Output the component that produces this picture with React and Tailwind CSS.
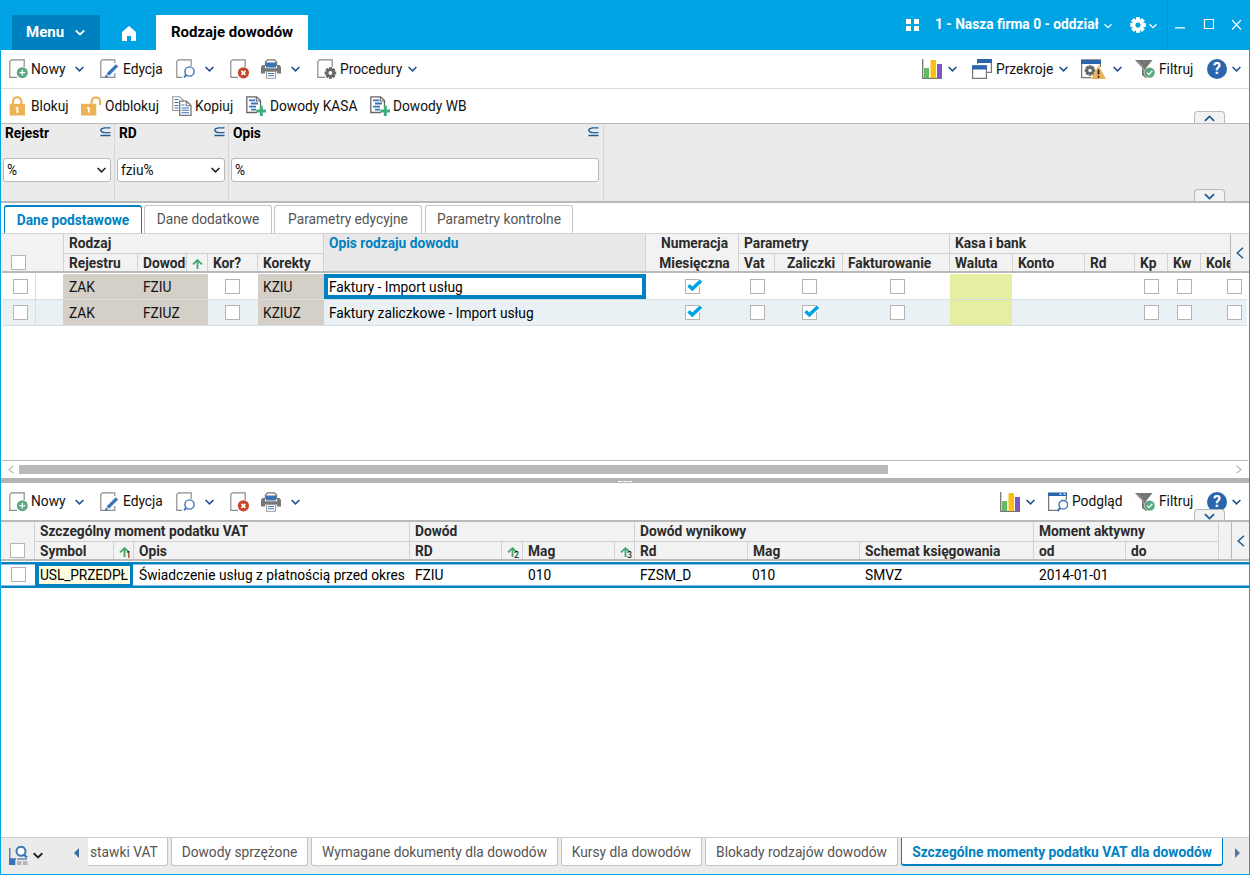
import React, { useState } from "react";

const Chevron = ({ className = "", color = "#1f4e8c", dir = "down", size = "w-[9px] h-[6px]", sw = 1.6 }) => (
  <svg viewBox="0 0 9 6" className={`shrink-0 ${size} ${className}`} fill="none" stroke={color} strokeWidth={sw}>
    <path d={dir === "up" ? "M0.6 5L4.5 1.2L8.4 5" : "M0.6 1L4.5 4.8L8.4 1"} />
  </svg>
);

const Svg = ({ children, w = 20, className = "" }) => (
  <svg width={w} height="20" viewBox={`0 0 ${w} 20`} fill="none" className={`shrink-0 ${className}`}>
    {children}
  </svg>
);

const Page = () => <path d="M15.2 8V0.8H2.4L0.8 2.4V18.3H8" stroke="#8c8c8c" strokeWidth="1.2" />;

const Cog = ({ cx, cy, r, fill, hole }) => (
  <g transform={`translate(${cx} ${cy})`} fill={fill}>
    {[0, 45, 90, 135].map((a) => (
      <rect key={a} x={-r * 0.26} y={-r} width={r * 0.52} height={r * 2} transform={`rotate(${a})`} />
    ))}
    <circle r={r * 0.74} />
    <circle r={r * 0.33} fill={hole} />
  </g>
);

const NewIcon = () => (
  <Svg>
    <Page />
    <circle cx="13.3" cy="13.7" r="5.5" fill="#58a881" />
    <path d="M13.3 10.8v5.8M10.4 13.7h5.8" stroke="#fff" strokeWidth="1.3" />
  </Svg>
);

const EditIcon = () => (
  <Svg>
    <path d="M14.8 4V0.8H2.4L0.8 2.4V18.3H14.8V14" stroke="#8c8c8c" strokeWidth="1.2" />
    <path d="M15.8 5.2L18.2 7.5L9 16.8L6.6 14.5Z" fill="#3a74b8" />
    <path d="M6 15.3L8.2 17.5L4.6 19Z" fill="#3a74b8" />
  </Svg>
);

const PreviewIcon = () => (
  <Svg>
    <path d="M15.2 7V0.8H2.4L0.8 2.4V18.3H6" stroke="#8c8c8c" strokeWidth="1.2" />
    <circle cx="13.5" cy="12.5" r="4.6" stroke="#3a74b8" strokeWidth="1.4" fill="#fff" />
    <path d="M10.4 15.7L8.1 18.4" stroke="#3a74b8" strokeWidth="2" />
  </Svg>
);

const DeleteIcon = () => (
  <Svg>
    <Page />
    <circle cx="13.4" cy="13.8" r="5.6" fill="#c8452a" />
    <path d="M11.4 11.8l4 4M15.4 11.8l-4 4" stroke="#fff" strokeWidth="1.7" />
  </Svg>
);

const PrintIcon = () => (
  <Svg>
    <path d="M4.5 7V3L6.5 0.8H13.5L15.5 3V7" fill="#fff" stroke="#777" strokeWidth="1.3" />
    <path d="M5 3.5H15V8.5H5Z" fill="#3a74b8" />
    <path d="M1.5 6H4V9.3H16V6H18.5L20 8V14.5H16V12.5H4V14.5H0V8Z" fill="#777" />
    <path d="M5.5 12.5H14.5V19.3H5.5Z" fill="#fff" stroke="#999" strokeWidth="1" />
    <path d="M7 14.5h6M7 16.7h6" stroke="#3a74b8" strokeWidth="1" />
  </Svg>
);

const ProcIcon = () => (
  <Svg>
    <Page />
    <Cog cx={13.4} cy={14} r={5.8} fill="#666" hole="#fff" />
  </Svg>
);

const ChartIcon = () => (
  <Svg>
    <path d="M0.7 0V19.3H20" stroke="#777" strokeWidth="1.3" />
    <rect x="2" y="9" width="5" height="10" fill="#63bb68" />
    <rect x="8.5" y="1" width="5.5" height="18" fill="#fdc00f" />
    <rect x="15" y="5" width="5" height="14" fill="#7e57c2" />
  </Svg>
);

const SectionsIcon = () => (
  <Svg>
    <path d="M5.6 5V0.7H19.4V13.3H15" stroke="#777" strokeWidth="1.2" />
    <rect x="5" y="0" width="15" height="4" fill="#2a66ae" />
    <path d="M0.6 7H14.4V19.3H0.6Z" stroke="#777" strokeWidth="1.2" fill="#fff" />
    <rect x="0" y="6.3" width="15" height="4.2" fill="#2a66ae" />
  </Svg>
);

const WarnIcon = () => (
  <Svg w={25}>
    <path d="M19.4 8V1H0.6V18.6H10" stroke="#777" strokeWidth="1.3" />
    <rect x="0" y="1" width="20" height="4" fill="#2a66ae" />
    <Cog cx={9} cy={11.5} r={5.3} fill="#666" hole="#fff" />
    <path d="M17.5 6.5L25 20H10Z" fill="#ecb255" />
    <path d="M17.5 10.5V15.5M17.5 17V18.8" stroke="#222" strokeWidth="1.7" />
  </Svg>
);

const FilterIcon = () => (
  <Svg>
    <path d="M0 1H17.5L11.5 8.5V19.5L7 16V8.5Z" fill="#757575" />
    <path d="M3 2.2L8.3 8.5V12" stroke="#aaa" strokeWidth="0.8" />
    <circle cx="14.6" cy="13.6" r="5.4" fill="#58a881" stroke="#fff" strokeWidth="0.5" />
    <path d="M12 13.6L14 15.6L17.3 11.8" stroke="#fff" strokeWidth="1.3" />
  </Svg>
);

const HelpIcon = () => (
  <span className="w-5 h-5 shrink-0 rounded-full bg-[#2a66ae] text-white font-bold text-[16px] leading-[20px] text-center">?</span>
);

const LookIcon = () => (
  <Svg>
    <path d="M0.6 3V18.3H9M18.4 3V8" stroke="#777" strokeWidth="1.3" />
    <rect x="0" y="0.5" width="19" height="3.5" fill="#2a66ae" />
    <path d="M11.5 2.2h2M15.5 2.2h2" stroke="#fff" strokeWidth="1.2" />
    <circle cx="15.3" cy="12.8" r="4.3" stroke="#3a74b8" strokeWidth="1.4" fill="#fff" />
    <path d="M12.2 16L9.5 19" stroke="#3a74b8" strokeWidth="2" />
  </Svg>
);

const LockIcon = ({ open }) => (
  <Svg>
    <path
      d={open ? "M10.7 9V5.6a4.2 4.2 0 0 1 8.4 0V9" : "M4 9V5.4a4.2 4.2 0 0 1 8.4 0V9"}
      stroke="#ecb255"
      strokeWidth="2.2"
    />
    <rect x={open ? 0 : 0.7} y="7.8" width="15.3" height="11.7" fill="#ecb255" />
    <path d={open ? "M7.8 11.2V16.5M6 11.7H7.5" : "M8.4 11.2V17M6.6 11.7H8"} stroke="#fff" strokeWidth="1.8" />
  </Svg>
);

const CopyIcon = () => (
  <Svg>
    <path d="M7 14.5H0.7V0.7H7.5L11 4V6" stroke="#999" strokeWidth="1.1" />
    <path d="M2.5 3.5h4M2.5 6.5h4M2.5 9.5h4M2.5 12h4" stroke="#3a74b8" strokeWidth="1" />
    <path d="M7.7 5.2H14.5L19 9.5V19.3H7.7Z" stroke="#777" strokeWidth="1.3" fill="#fff" />
    <path d="M14.3 5.5V9.7H19" stroke="#777" strokeWidth="1.1" />
    <path d="M9.5 9h3M9.5 12h7.5M9.5 14.3h7.5M9.5 16.7h7.5" stroke="#3a74b8" strokeWidth="1.1" />
  </Svg>
);

const DocPlusIcon = () => (
  <Svg>
    <path d="M14.5 10V4.5L10.5 0.8H0.8V16.5H11" stroke="#666" strokeWidth="1.3" />
    <path d="M10.3 1V5H14.5" stroke="#666" strokeWidth="1.2" />
    <path d="M3 4.3h6M5 7.5h7M3 10.7h7M5 13.7h5" stroke="#3a74b8" strokeWidth="1.8" />
    <path d="M15.3 9.8V20M10.3 14.9H20" stroke="#3fae7c" strokeWidth="3" />
  </Svg>
);

const SubsetIcon = ({ className = "" }) => (
  <svg width="11" height="10" viewBox="0 0 11 10" fill="none" stroke="#1d5c96" strokeWidth="1.3" className={className}>
    <path d="M10.5 0.9H4.5Q0.8 1.4 0.8 3.2T4.5 5.7H10.5M0.5 8.5H10.5" />
  </svg>
);

const SortArrow = ({ n }) => (
  <span className="relative flex h-[18px] pt-[5px] pl-[5px]">
    <svg width="11" height="10" viewBox="0 0 11 10" fill="none" stroke="#3fa672" strokeWidth="1.8">
      <path d="M5.5 10V1.5M1 5.4L5.5 1.2L10 5.4" />
    </svg>
    {n && <span className="absolute left-[12px] top-[8px] text-[9px] leading-[10px] font-normal text-black">{n}</span>}
  </span>
);

const Check = ({ checked, className = "" }) => (
  <span className={`relative block w-[15px] h-[15px] shrink-0 bg-white border border-[#b4b4b4] ${className}`}>
    {checked && (
      <svg className="absolute left-[1px] -top-px" width="16" height="13" viewBox="0 0 16 13" fill="none">
        <path d="M1.5 6.8L5.3 10.3L14 2.2" stroke="#fff" strokeWidth="5.5" />
        <path d="M1.5 6.3L5.3 9.8L14 1.8" stroke="#00a4e4" strokeWidth="3.6" />
      </svg>
    )}
  </span>
);

const Item = ({ icon, label, chevron, className = "", labelClass = "" }) => (
  <button className={`flex items-center shrink-0 text-left whitespace-nowrap ${className}`}>
    {icon}
    {label && <span className={labelClass}>{label}</span>}
    {chevron && <Chevron className="ml-auto" />}
  </button>
);

const EditItems = () => (
  <>
    <Item icon={<NewIcon />} label="Nowy" labelClass="ml-[2px]" chevron className="w-[75px] mr-4" />
    <Item icon={<EditIcon />} label="Edycja" labelClass="ml-[3px]" className="w-[76px]" />
    <Item icon={<PreviewIcon />} chevron className="w-[38px] mr-4" />
    <Item icon={<DeleteIcon />} className="w-[31px]" />
    <Item icon={<PrintIcon />} chevron className="w-[39px] mr-[17px]" />
  </>
);

const Notch = ({ dir, className }) => (
  <div
    className={`absolute right-[24px] flex justify-center w-[31px] pt-[3px] bg-[#f2f2f2] border border-b-0 border-[#b9b9b9] rounded-t-[4px] ${className}`}
  >
    <Chevron dir={dir} size="w-[11px] h-[7px]" sw={1.5} color="#1d5c96" />
  </div>
);

const filters = [
  { label: "Rejestr", value: "%", select: true, width: "w-[114px] pr-[3px]" },
  { label: "RD", value: "fziu%", select: true, width: "w-[114px] pr-[3px]" },
  { label: "Opis", value: "%", width: "w-[375px] pr-[4px]" },
];

const topTabs = [
  { label: "Dane podstawowe", width: "w-[138px]" },
  { label: "Dane dodatkowe", width: "w-[128px]" },
  { label: "Parametry edycyjne", width: "w-[148px]" },
  { label: "Parametry kontrolne", width: "w-[148px] ml-px" },
];

const bottomTabs = [
  { label: "stawki VAT", width: "w-[80px]" },
  { label: "Dowody sprzężone", width: "w-[137px]" },
  { label: "Wymagane dokumenty dla dowodów", width: "w-[247px]" },
  { label: "Kursy dla dowodów", width: "w-[141px]" },
  { label: "Blokady rodzajów dowodów", width: "w-[193px]" },
  { label: "Szczególne momenty podatku VAT dla dowodów", width: "w-[322px]" },
];

const mainGroups = [
  {
    title: "Rodzaj",
    width: "w-[260px]",
    cols: [
      { label: "Rejestru", width: "w-[74px]" },
      { label: "Dowodu", width: "w-[49px]" },
      { sort: true, width: "w-[21px]" },
      { label: "Kor?", width: "w-[50px]" },
      { label: "Korekty", width: "w-[66px]" },
    ],
  },
  { title: "Opis rodzaju dowodu", width: "w-[322px]", active: true },
  { title: "Numeracja", second: "Miesięczna", width: "w-[93px]" },
  {
    title: "Parametry",
    width: "w-[211px]",
    cols: [
      { label: "Vat", width: "w-[36px]" },
      { label: "Zaliczki", width: "w-[68px]", pad: "pl-[12px]" },
      { label: "Fakturowanie", width: "w-[107px]" },
    ],
  },
  {
    title: "Kasa i bank",
    width: "w-[281px]",
    cols: [
      { label: "Waluta", width: "w-[63px]" },
      { label: "Konto", width: "w-[72px]" },
      { label: "Rd", width: "w-[50px]" },
      { label: "Kp", width: "w-[33px]" },
      { label: "Kw", width: "w-[33px]" },
      { label: "Kole", width: "w-[30px]" },
    ],
  },
];

const mainRows = [
  { rej: "ZAK", dow: "FZIU", kor: "KZIU", opis: "Faktury - Import usług", mies: true, zal: false },
  { rej: "ZAK", dow: "FZIUZ", kor: "KZIUZ", opis: "Faktury zaliczkowe - Import usług", mies: true, zal: true },
];

const detailGroups = [
  {
    title: "Szczególny moment podatku VAT",
    width: "w-[375px]",
    cols: [
      { label: "Symbol", width: "w-[79px]" },
      { sort: "1", width: "w-[20px]" },
      { label: "Opis", width: "w-[276px]" },
    ],
  },
  {
    title: "Dowód",
    width: "w-[225px]",
    cols: [
      { label: "RD", width: "w-[92px]" },
      { sort: "2", width: "w-[21px]" },
      { label: "Mag", width: "w-[92px]" },
      { sort: "3", width: "w-[20px]" },
    ],
  },
  {
    title: "Dowód wynikowy",
    width: "w-[399px]",
    cols: [
      { label: "Rd", width: "w-[113px]" },
      { label: "Mag", width: "w-[112px]" },
      { label: "Schemat księgowania", width: "w-[174px]" },
    ],
  },
  {
    title: "Moment aktywny",
    width: "w-[185px]",
    cols: [
      { label: "od", width: "w-[92px]" },
      { label: "do", width: "w-[93px]" },
    ],
  },
];

const HeaderGroup = ({ group }) => (
  <div
    className={`flex flex-col shrink-0 h-full border-l border-[#d2d2d2] ${group.width} ${
      group.active ? "bg-[#e8e8e8] text-[#0081c1]" : ""
    }`}
  >
    <div className={`h-[19px] leading-[19px] ${group.second ? "text-center pl-[5px]" : "pl-[5px]"}`}>{group.title}</div>
    {group.second && <div className="h-[19px] pl-[5px] leading-[21px] text-center">{group.second}</div>}
    {group.cols && (
      <div className="flex -ml-px flex-1 border-t border-[#d2d2d2] overflow-hidden">
        {group.cols.map((c, i) => (
          <div
            key={i}
            className={`h-full leading-[19px] border-l border-[#d2d2d2] shrink-0 overflow-hidden whitespace-nowrap ${c.width}`}
          >
            {c.sort ? <SortArrow n={c.sort === true ? null : c.sort} /> : <span className={c.pad || "pl-[5px]"}>{c.label}</span>}
          </div>
        ))}
      </div>
    )}
  </div>
);

const SidePanel = ({ className }) => (
  <div className={`flex items-center justify-center shrink-0 bg-[#f2f2f2] border-l border-[#b9b9b9] ${className}`}>
    <svg width="8" height="12" viewBox="0 0 8 12" fill="none" stroke="#1d5c96" strokeWidth="1.5">
      <path d="M7 0.8L1.2 6L7 11.2" />
    </svg>
  </div>
);

function TitleBar() {
  return (
    <header className="flex h-[50px] bg-[#00a4e4] text-white font-bold">
      <div className="flex items-center w-[88px] h-[35px] mt-[15px] ml-[11px] pl-[14px] bg-[#0080bf] text-[15px]">
        Menu
        <Chevron color="#fff" className="ml-[11px]" size="w-[10px] h-[7px]" />
      </div>
      <svg className="mt-[26px] ml-[22px]" width="14" height="15" viewBox="0 0 14 15" fill="#fff">
        <path d="M7 0L14 6V15H9V10H5V15H0V6Z" />
      </svg>
      <div className="w-[152px] h-[35px] mt-[15px] ml-5 leading-[34px] bg-white text-black text-center text-[15px]">
        Rodzaje dowodów
      </div>
      <div className="flex items-center h-[49px] ml-auto">
        <svg className="mr-4" width="13" height="12" viewBox="0 0 13 12" fill="#fff">
          <path d="M0 0h5v5H0zM8 0h5v5H8zM0 7h5v5H0zM8 7h5v5H8z" />
        </svg>
        <span className="w-[169px] whitespace-nowrap">1 - Nasza firma 0 - oddział</span>
        <Chevron color="#fff" className="mt-[3px]" size="w-[8px] h-[6px]" sw={1.3} />
        <svg className="ml-[18px]" width="16" height="16" viewBox="0 0 16 16">
          <Cog cx={8} cy={8} r={7.8} fill="#fff" hole="#00a4e4" />
        </svg>
        <Chevron color="#fff" className="ml-[3px] mt-[3px]" size="w-[8px] h-[6px]" sw={1.3} />
      </div>
      <div className="flex w-[82px] ml-[10px] border-l border-[#0092d2] pt-[19px] pl-[7px]">
        <svg width="67" height="12" viewBox="0 0 67 12" fill="none" stroke="#fff" strokeWidth="1.1">
          <path d="M0 8.9H10M29.5 0.5H38.5V9.5H29.5ZM57 1L66 10.5M66 1L57 10.5" />
        </svg>
      </div>
    </header>
  );
}

function FilterPanel() {
  return (
    <section className="relative flex h-[80px] bg-[#ebebeb] border-t border-t-[#b9b9b9] border-b-2 border-b-[#b9b9b9]">
      {filters.map((f) => (
        <div key={f.label} className={`flex flex-col border-r border-[#d6d6d6] pl-[2px] ${f.width}`}>
          <div className="flex justify-between h-[34px] pl-[2px] font-bold leading-[18px] text-black">
            {f.label}
            <SubsetIcon className="mt-[3px]" />
          </div>
          <div className="flex items-center justify-between h-6 pl-[3px] pr-[4px] bg-white border border-[#b9b9b9] rounded-[3px]">
            {f.value}
            {f.select && <Chevron color="#222" size="w-[9px] h-[6px]" />}
          </div>
        </div>
      ))}
      <Notch dir="down" className="h-[12px] bottom-0" />
    </section>
  );
}

function MainGrid() {
  return (
    <section className="flex flex-col h-[245px]">
      <div className="flex h-[40px] ml-px bg-[#f2f2f2] border-t border-t-[#d2d2d2] border-b-2 border-b-[#b9b9b9] font-bold text-[#2b2b2b]">
        <div className="w-[61px] shrink-0 pt-[21px] pl-[9px]">
          <Check />
        </div>
        {mainGroups.map((g) => (
          <HeaderGroup key={g.title} group={g} />
        ))}
        <SidePanel className="w-[19px] h-[37px]" />
      </div>
      {mainRows.map((r, i) => (
        <div
          key={r.dow}
          className={`flex shrink-0 h-[26px] ml-[2px] mr-[2px] overflow-hidden border-b border-[#d3dfe3] leading-[27px] ${
            i === 1 ? "bg-[#e9f1f5]" : "bg-white mt-px"
          }`}
        >
          <div className="w-[33px] shrink-0 border-r border-[#d3dfe8] pt-[5px] pl-[10px]">
            <Check />
          </div>
          <div className="w-[27px] shrink-0" />
          <div className="w-[74px] shrink-0 pl-[6px] bg-[#d4cfc7]">{r.rej}</div>
          <div className="w-[71px] shrink-0 pl-[6px] bg-[#d4cfc7]">{r.dow}</div>
          <div className="w-[50px] shrink-0 pt-[5px] pl-[17px]">
            <Check />
          </div>
          <div className="w-[66px] shrink-0 pl-[5px] bg-[#d4cfc7]">{r.kor}</div>
          <div
            className={`w-[322px] shrink-0 text-black ${
              i === 0 ? "border-4 border-[#0081c1] pl-[1px] leading-[19px]" : "pl-[5px]"
            }`}
          >
            {r.opis}
          </div>
          <div className="w-[92px] shrink-0 pt-[5px] pl-[39px]">
            <Check checked={r.mies} />
          </div>
          <div className="w-[36px] shrink-0 pt-[5px] pl-[12px]">
            <Check />
          </div>
          <div className="w-[68px] shrink-0 pt-[5px] pl-[28px]">
            <Check checked={r.zal} />
          </div>
          <div className="w-[108px] shrink-0 pt-[5px] pl-[48px]">
            <Check />
          </div>
          <div className="w-[62px] shrink-0 bg-[#e6eea2]" />
          <div className="w-[122px] shrink-0" />
          <div className="w-[33px] shrink-0 pt-[5px] pl-[10px]">
            <Check />
          </div>
          <div className="w-[33px] shrink-0 pt-[5px] pl-[10px]">
            <Check />
          </div>
          <div className="flex-1 pt-[5px] pl-[27px]">
            <Check />
          </div>
        </div>
      ))}
      <div className="flex items-center mt-auto h-[18px] mx-px pl-[6px] pr-[6px] border-t border-[#b9b9b9]">
        <svg width="6" height="9" viewBox="0 0 6 9" fill="none" stroke="#b9b9b9" strokeWidth="1.2">
          <path d="M5.5 0.8L1 4.5L5.5 8.2" />
        </svg>
        <div className="w-[869px] h-[9px] ml-[5px] bg-[#b9b9b9]" />
        <svg className="ml-auto" width="6" height="9" viewBox="0 0 6 9" fill="none" stroke="#b9b9b9" strokeWidth="1.2">
          <path d="M0.5 0.8L5 4.5L0.5 8.2" />
        </svg>
      </div>
    </section>
  );
}

function DetailGrid() {
  return (
    <section className="flex-1 flex flex-col min-h-0">
      <div className="relative flex h-[41px] bg-[#f2f2f2] border-y-2 border-[#b9b9b9] font-bold text-[#2b2b2b]">
        <div className="w-[33px] shrink-0 pt-[21px] pl-[9px]">
          <Check />
        </div>
        {detailGroups.map((g) => (
          <HeaderGroup key={g.title} group={g} />
        ))}
        <div className="w-[13px] shrink-0 border-l border-[#d2d2d2]" />
        <SidePanel className="w-[18px] h-full" />
        <Notch dir="down" className="h-[11px] bottom-[39px]" />
      </div>
      <div className="flex h-[26px] mt-px border-y-2 border-[#0081c1] leading-[22px] whitespace-nowrap text-black">
        <div className="w-[34px] shrink-0 border-y border-[#7fc0e0] pt-[2px] pl-[10px]">
          <Check />
        </div>
        <div className="w-[98px] shrink-0 p-[2px] pl-[4px] pr-[3px] bg-[#0081c1]">
          <div className="h-[18px] leading-[18px] pl-[1px] bg-[#fffde0] tracking-[-0.1px]">USL_PRZEDPŁ</div>
        </div>
        <div className="flex flex-1 leading-[21px] border-y border-[#7fc0e0]">
          <div className="w-[276px] shrink-0 pl-[6px] overflow-hidden">Świadczenie usług z płatnością przed okres</div>
          <div className="w-[113px] shrink-0 pl-[6px]">FZIU</div>
          <div className="w-[112px] shrink-0 pl-[6px]">010</div>
          <div className="w-[112px] shrink-0 pl-[6px]">FZSM_D</div>
          <div className="w-[113px] shrink-0 pl-[6px]">010</div>
          <div className="w-[174px] shrink-0 pl-[6px]">SMVZ</div>
          <div className="shrink-0 pl-[6px]">2014-01-01</div>
        </div>
      </div>
    </section>
  );
}

function BottomTabs({ active, setActive }) {
  return (
    <footer className="flex h-[37px] bg-[#ebebeb] border-t border-[#cfcfcf]">
      <svg className="ml-[8px] mt-[8px]" width="19" height="20" viewBox="0 0 19 20" fill="none">
        <path d="M0.8 2V14M0.8 13H7" stroke="#3a74b8" strokeWidth="1.3" />
        <path d="M0 13H6.3V19H0Z" fill="#3a74b8" />
        <path d="M8 15h4.5v4H8zM14 15h4.5v4H14z" fill="#b5b5b5" />
        <circle cx="12" cy="5.3" r="4.5" stroke="#3a74b8" strokeWidth="2" fill="#fff" />
        <path d="M15 8.5L17.8 11.5" stroke="#3a74b8" strokeWidth="2.2" />
        <path d="M8 13h10" stroke="#3a74b8" strokeWidth="1.2" />
      </svg>
      <Chevron color="#222" className="ml-[5px] mt-[14px]" size="w-[10px] h-[7px]" sw={1.7} />
      <svg className="ml-[31px] mt-[10px]" width="5" height="10" viewBox="0 0 5 10" fill="#3a6ea5">
        <path d="M5 0V10L0 5Z" />
      </svg>
      <div className="flex gap-[3px] ml-[9px] text-[#555]">
        {bottomTabs.map((t, i) => (
          <button
            key={t.label}
            onClick={() => setActive(i)}
            className={`h-[28px] leading-[28px] shrink-0 whitespace-nowrap bg-white rounded-b-[3px] ${t.width} ${
              active === i
                ? "border-x border-b-2 border-[#0081c1] text-[#0081c1] font-bold"
                : "border border-t-0 border-[#c4c4c4]"
            } ${i === 0 ? "border-l-0 rounded-bl-none text-left pl-[2px]" : ""}`}
          >
            {t.label}
          </button>
        ))}
      </div>
      <svg className="ml-auto mr-[9px] mt-[10px]" width="5" height="10" viewBox="0 0 5 10" fill="#56789e">
        <path d="M0 0V10L5 5Z" />
      </svg>
    </footer>
  );
}

export default function App() {
  const [tab, setTab] = useState(0);
  const [bottomTab, setBottomTab] = useState(5);

  return (
    <div className="w-[1250px] h-[875px] flex flex-col overflow-hidden bg-white border border-t-0 border-[#00a4e4] font-['Roboto',sans-serif] text-[13.75px] text-[#111]">
      <TitleBar />

      <div className="flex items-center h-[39px] pl-[8px] pr-[8px] border-b border-[#dedede]">
        <EditItems />
        <Item icon={<ProcIcon />} label="Procedury" labelClass="ml-[3px]" chevron className="w-[100px]" />
        <Item icon={<ChartIcon />} chevron className="w-[35px] ml-auto mr-[15px]" />
        <Item icon={<SectionsIcon />} label="Przekroje" labelClass="ml-[4px]" chevron className="w-[96px] mr-[13px]" />
        <Item icon={<WarnIcon />} chevron className="w-[41px] mr-[13px]" />
        <Item icon={<FilterIcon />} label="Filtruj" labelClass="ml-[4px]" className="w-[72px]" />
        <Item icon={<HelpIcon />} chevron className="w-[34px]" />
      </div>

      <div className="relative flex items-center h-[34px] pl-[8px]">
        <Item icon={<LockIcon />} label="Blokuj" labelClass="ml-[2px]" className="w-[72px]" />
        <Item icon={<LockIcon open />} label="Odblokuj" labelClass="ml-[4px]" className="w-[91px]" />
        <Item icon={<CopyIcon />} label="Kopiuj" labelClass="ml-[3px]" className="w-[74px]" />
        <Item icon={<DocPlusIcon />} label="Dowody KASA" labelClass="ml-[4px]" className="w-[124px]" />
        <Item icon={<DocPlusIcon />} label="Dowody WB" labelClass="ml-[3px]" />
        <Notch dir="up" className="h-[12px] bottom-0" />
      </div>

      <FilterPanel />

      <div className="flex items-end h-[30px] pl-[3px] gap-[2px] text-[#555]">
        {topTabs.map((t, i) => (
          <button
            key={t.label}
            onClick={() => setTab(i)}
            className={`h-[28px] shrink-0 whitespace-nowrap rounded-t-[3px] bg-white ${t.width} ${
              tab === i
                ? "border-x border-t-2 border-[#0081c1] text-[#0081c1] font-bold leading-[25px]"
                : "border border-[#c4c4c4] border-b-0 leading-[27px]"
            }`}
          >
            {t.label}
          </button>
        ))}
      </div>

      <MainGrid />

      <div className="flex justify-center h-[5px] bg-[#b4b4b4]">
        <div className="flex gap-px pt-[3px]">
          <span className="w-[4px] h-px bg-white" />
          <span className="w-[4px] h-px bg-white" />
          <span className="w-[4px] h-px bg-white" />
        </div>
      </div>

      <div className="flex items-center h-[37px] pl-[8px] pr-[8px]">
        <EditItems />
        <Item icon={<ChartIcon />} chevron className="w-[35px] ml-auto mr-[13px]" />
        <Item icon={<LookIcon />} label="Podgląd" labelClass="ml-[4px]" className="w-[87px]" />
        <Item icon={<FilterIcon />} label="Filtruj" labelClass="ml-[4px]" className="w-[72px]" />
        <Item icon={<HelpIcon />} chevron className="w-[34px]" />
      </div>

      <DetailGrid />

      <BottomTabs active={bottomTab} setActive={setBottomTab} />
    </div>
  );
}
